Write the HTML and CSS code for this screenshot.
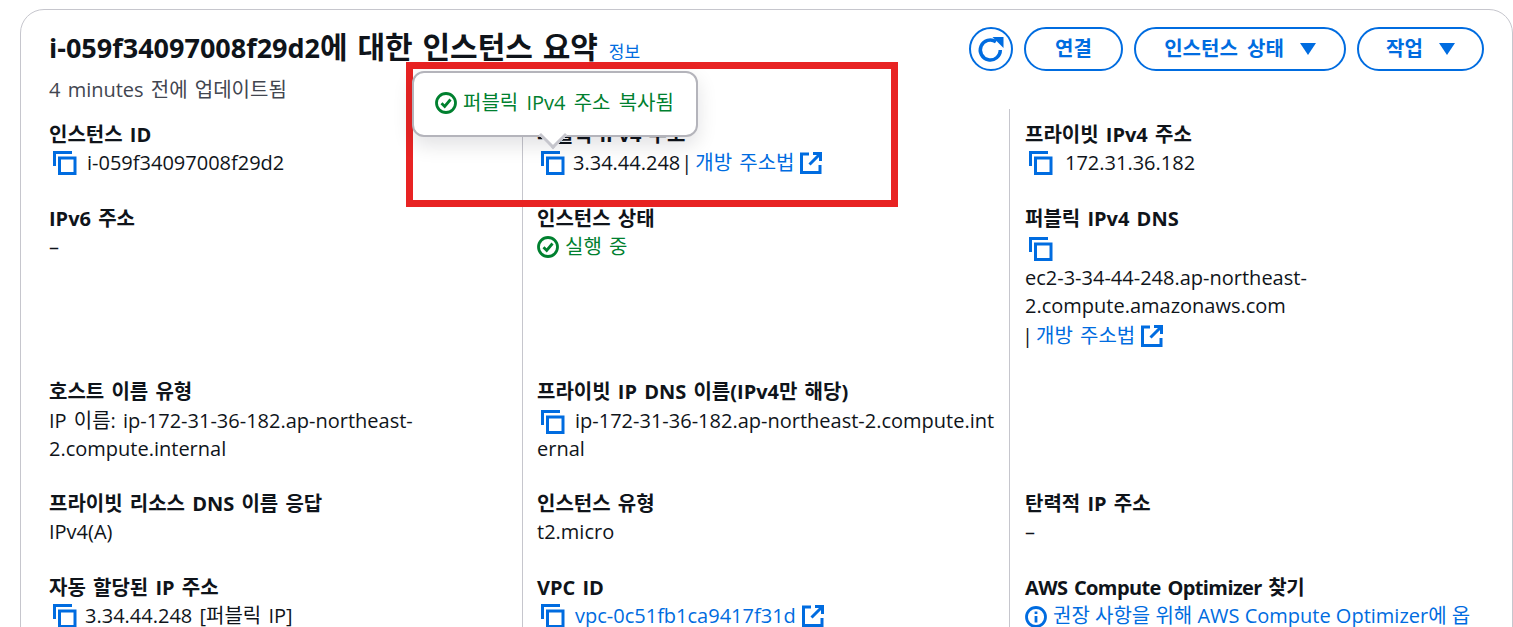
FILE: index.html
```html
<!DOCTYPE html>
<html lang="ko">
<head>
    <meta charset="UTF-8">
    <meta name="viewport" content="width=device-width, initial-scale=1.0">
    <title>인스턴스 요약</title>
    <link rel="stylesheet" href="styles.css">
</head>
<body>
    <svg class="defs" width="0" height="0" aria-hidden="true">
        <symbol id="copy" viewBox="0 0 24 24"><path d="M1.500 15V1.500H19" /><rect x="6.500" y="7" width="15.500" height="15.500" /></symbol>
        <symbol id="ext" viewBox="0 0 22 22"><path d="M9 2H1.500v18.500H20V13" /><path d="M13 1.500h7.500V9M20 2 9.500 12.500" /></symbol>
        <symbol id="check" viewBox="0 0 22 22"><circle cx="11" cy="11" r="9.500" /><path d="M6.500 11.200 9.700 14.500 15.500 7.500" /></symbol>
    </svg>

    <div class="card">
        <header class="head">
            <div>
                <h1 class="title">i-059f34097008f29d2<span class="title-ko">에 대한 인스턴스 요약</span> <a class="info" href="#">정보</a></h1>
                <p class="updated">4 minutes 전에 업데이트됨</p>
            </div>
            <div class="actions">
                <button class="btn btn-icon" aria-label="새로 고침">
                    <svg viewBox="0 2 30 30" width="30" height="30"><path d="M24.300 18A10 10 0 1 1 20 9.800" /><path class="solid" d="M16.500 5h11v11z" /></svg>
                </button>
                <button class="btn btn-connect">연결</button>
                <button class="btn btn-state">인스턴스 상태<span class="caret"></span></button>
                <button class="btn btn-work">작업<span class="caret"></span></button>
            </div>
        </header>

        <div class="grid">
            <div class="cell">
                <div class="label">인스턴스 ID</div>
                <div class="value"><svg class="ico copy"><use href="#copy" /></svg>i-059f34097008f29d2</div>
            </div>
            <div class="cell">
                <div class="label">퍼블릭 IPv4 주소</div>
                <div class="value"><svg class="ico copy tight"><use href="#copy" /></svg>3.34.44.248<span class="sep">|</span><a href="#">개방 주소법</a><svg class="ico ext"><use href="#ext" /></svg></div>
            </div>
            <div class="cell">
                <div class="label">프라이빗 IPv4 주소</div>
                <div class="value"><svg class="ico copy wide"><use href="#copy" /></svg>172.31.36.182</div>
            </div>

            <div class="cell">
                <div class="label">IPv6 주소</div>
                <div class="value">–</div>
            </div>
            <div class="cell">
                <div class="label">인스턴스 상태</div>
                <div class="value ok"><svg class="ico check"><use href="#check" /></svg>실행 중</div>
            </div>
            <div class="cell">
                <div class="label">퍼블릭 IPv4 DNS</div>
                <div class="value copy-line"><svg class="ico copy"><use href="#copy" /></svg></div>
                <div class="dns">ec2-3-34-44-248.ap-northeast-2.compute.amazonaws.com</div>
                <div class="value link-line"><span class="sep sep-start">|</span><a href="#">개방 주소법</a><svg class="ico ext"><use href="#ext" /></svg></div>
            </div>

            <div class="cell">
                <div class="label">호스트 이름 유형</div>
                <div class="inline">IP 이름: ip-172-31-36-182.ap-northeast-2.compute.internal</div>
            </div>
            <div class="cell">
                <div class="label">프라이빗 IP DNS 이름(IPv4만 해당)</div>
                <div class="inline broken"><svg class="ico copy"><use href="#copy" /></svg>ip-172-31-36-182.ap-northeast-2.compute.internal</div>
            </div>
            <div class="cell empty"></div>

            <div class="cell">
                <div class="label">프라이빗 리소스 DNS 이름 응답</div>
                <div class="value">IPv4(A)</div>
            </div>
            <div class="cell">
                <div class="label">인스턴스 유형</div>
                <div class="value">t2.micro</div>
            </div>
            <div class="cell">
                <div class="label">탄력적 IP 주소</div>
                <div class="value">–</div>
            </div>

            <div class="cell">
                <div class="label">자동 할당된 IP 주소</div>
                <div class="value"><svg class="ico copy tight"><use href="#copy" /></svg>3.34.44.248 [퍼블릭 IP]</div>
            </div>
            <div class="cell">
                <div class="label">VPC ID</div>
                <div class="value"><svg class="ico copy"><use href="#copy" /></svg><a href="#">vpc-0c51fb1ca9417f31d</a><svg class="ico ext"><use href="#ext" /></svg></div>
            </div>
            <div class="cell">
                <div class="label condensed">AWS Compute Optimizer 찾기</div>
                <div class="value optin"><svg class="ico info-ico" viewBox="0 0 22 22"><circle cx="11" cy="11" r="9.500" /><path d="M11 10v6.500" /><path d="M11 5.500v2.500" /></svg><a href="#">권장 사항을 위해 AWS Compute Optimizer에 옵</a></div>
            </div>
        </div>
    </div>

    <!-- popover and the red mark sit over the card -->
    <div class="mark"></div>
    <div class="popover">
        <svg class="ico check"><use href="#check" /></svg>퍼블릭 IPv4 주소 복사됨
    </div>
</body>
</html>
```

FILE: styles.css
```css
html, body {
    margin: 0;
    height: 627px;
    overflow: hidden;
    background: #fff;
}
body {
    font-family: "Open Sans", "Noto Sans CJK KR", sans-serif;
    font-size: 20px;
    line-height: 28px;
    word-spacing: 2px;
    color: #0f141a;
    position: relative;
}
a {
    color: #006ce0;
    text-decoration: none;
}
.defs {
    position: absolute;
}
.card {
    margin: 9px 0 0 20px;
    padding: 0 28px;
    height: 700px;
    border: 1px solid #c6c6cd;
    border-radius: 24px;
}
.head {
    display: flex;
    justify-content: space-between;
    height: 98px;
}
.title {
    margin: 20px 0 0;
    font-size: 27px;
    line-height: 34px;
    font-weight: 700;
}
.title-ko {
    font-size: 30px;
    word-spacing: 2px;
}
.info {
    font-size: 17px;
    font-weight: 400;
    margin-left: 2px;
}
.updated {
    margin: 7px 0 0;
    color: #424650;
}
.actions {
    display: flex;
    gap: 11px;
    padding-top: 17px;
}
.btn {
    height: 44px;
    box-sizing: border-box;
    border: 2px solid #006ce0;
    border-radius: 22px;
    background: #fff;
    color: #006ce0;
    font: 700 20px "Open Sans", "Noto Sans CJK KR", sans-serif;
    word-spacing: 4px;
    padding: 0 0 3px;
    display: flex;
    align-items: center;
    justify-content: center;
}
.btn-icon {
    width: 44px;
    padding: 0;
}
.btn-icon svg {
    fill: none;
    stroke: #006ce0;
    stroke-width: 3.500;
}
.btn-icon .solid {
    fill: #006ce0;
    stroke: none;
}
.btn-connect {
    width: 99px;
}
.btn-state {
    width: 212px;
}
.btn-work {
    width: 127px;
}
.caret {
    width: 0;
    height: 0;
    margin: 3px 0 0 16px;
    border-left: 8px solid transparent;
    border-right: 8px solid transparent;
    border-top: 12px solid #006ce0;
}
.grid {
    display: grid;
    grid-template-columns: repeat(3, 487px);
    margin: 1px -14px 0;
}
.cell {
    padding: 0 14px 28px;
    border-left: 1px solid #c6c6cd;
    min-width: 0;
    box-sizing: border-box;
}
.cell:nth-child(3n+1) {
    border-left: none;
}
.cell:nth-child(3n) {
    padding-left: 15px;
}
.cell:nth-child(-n+3) {
    padding-top: 12px;
}
.label {
    font-weight: 700;
}
.condensed {
    letter-spacing: -0.6px;
}
.value {
    display: flex;
    align-items: center;
    min-height: 28px;
}
.copy-line {
    height: 31px;
}
.link-line {
    margin-top: 2px;
}
.inline {
    padding-top: 1px;
    margin-bottom: -1px;
}
.broken {
    word-break: break-all;
}
.broken .copy {
    vertical-align: -6px;
}
.dns {
    width: 300px;
}
.sep {
    margin: 0 3px 0 1px;
}
.sep-start {
    margin-left: -3px;
}
.optin {
    white-space: nowrap;
    word-spacing: 0;
}
.ico {
    fill: none;
    stroke: #006ce0;
    flex: none;
}
.copy {
    width: 24px;
    height: 24px;
    margin: 0 10px 0 4px;
    stroke-width: 3;
}
.copy.tight {
    margin-right: 8px;
}
.copy.wide {
    margin-right: 12px;
}
.ext {
    width: 22px;
    height: 22px;
    margin-left: 6px;
    stroke-width: 3;
}
.check {
    width: 22px;
    height: 22px;
    margin-right: 6px;
    stroke: #00802f;
    stroke-width: 2.800;
}
.ok {
    color: #00802f;
}
.info-ico {
    width: 22px;
    height: 22px;
    margin: 2px 6px 0 0;
    stroke-width: 2.800;
}
.mark {
    position: absolute;
    left: 406px;
    top: 62px;
    width: 492px;
    height: 145px;
    box-sizing: border-box;
    border: 7px solid #e82323;
}
.popover {
    position: absolute;
    left: 412px;
    top: 71px;
    width: 286px;
    height: 66px;
    box-sizing: border-box;
    padding: 0 0 2px 21px;
    word-spacing: 3px;
    display: flex;
    align-items: center;
    color: #00802f;
    background: #fff;
    border: 2px solid #b4b4bb;
    border-radius: 12px;
    box-shadow: 0 8px 20px rgba(0, 7, 22, 0.12);
}
.popover::after {
    content: "";
    position: absolute;
    left: 129px;
    bottom: -10px;
    width: 20px;
    height: 20px;
    background: #fff;
    border-right: 3px solid #c6c6cd;
    border-bottom: 3px solid #c6c6cd;
    box-sizing: border-box;
    transform: rotate(45deg);
}
```
